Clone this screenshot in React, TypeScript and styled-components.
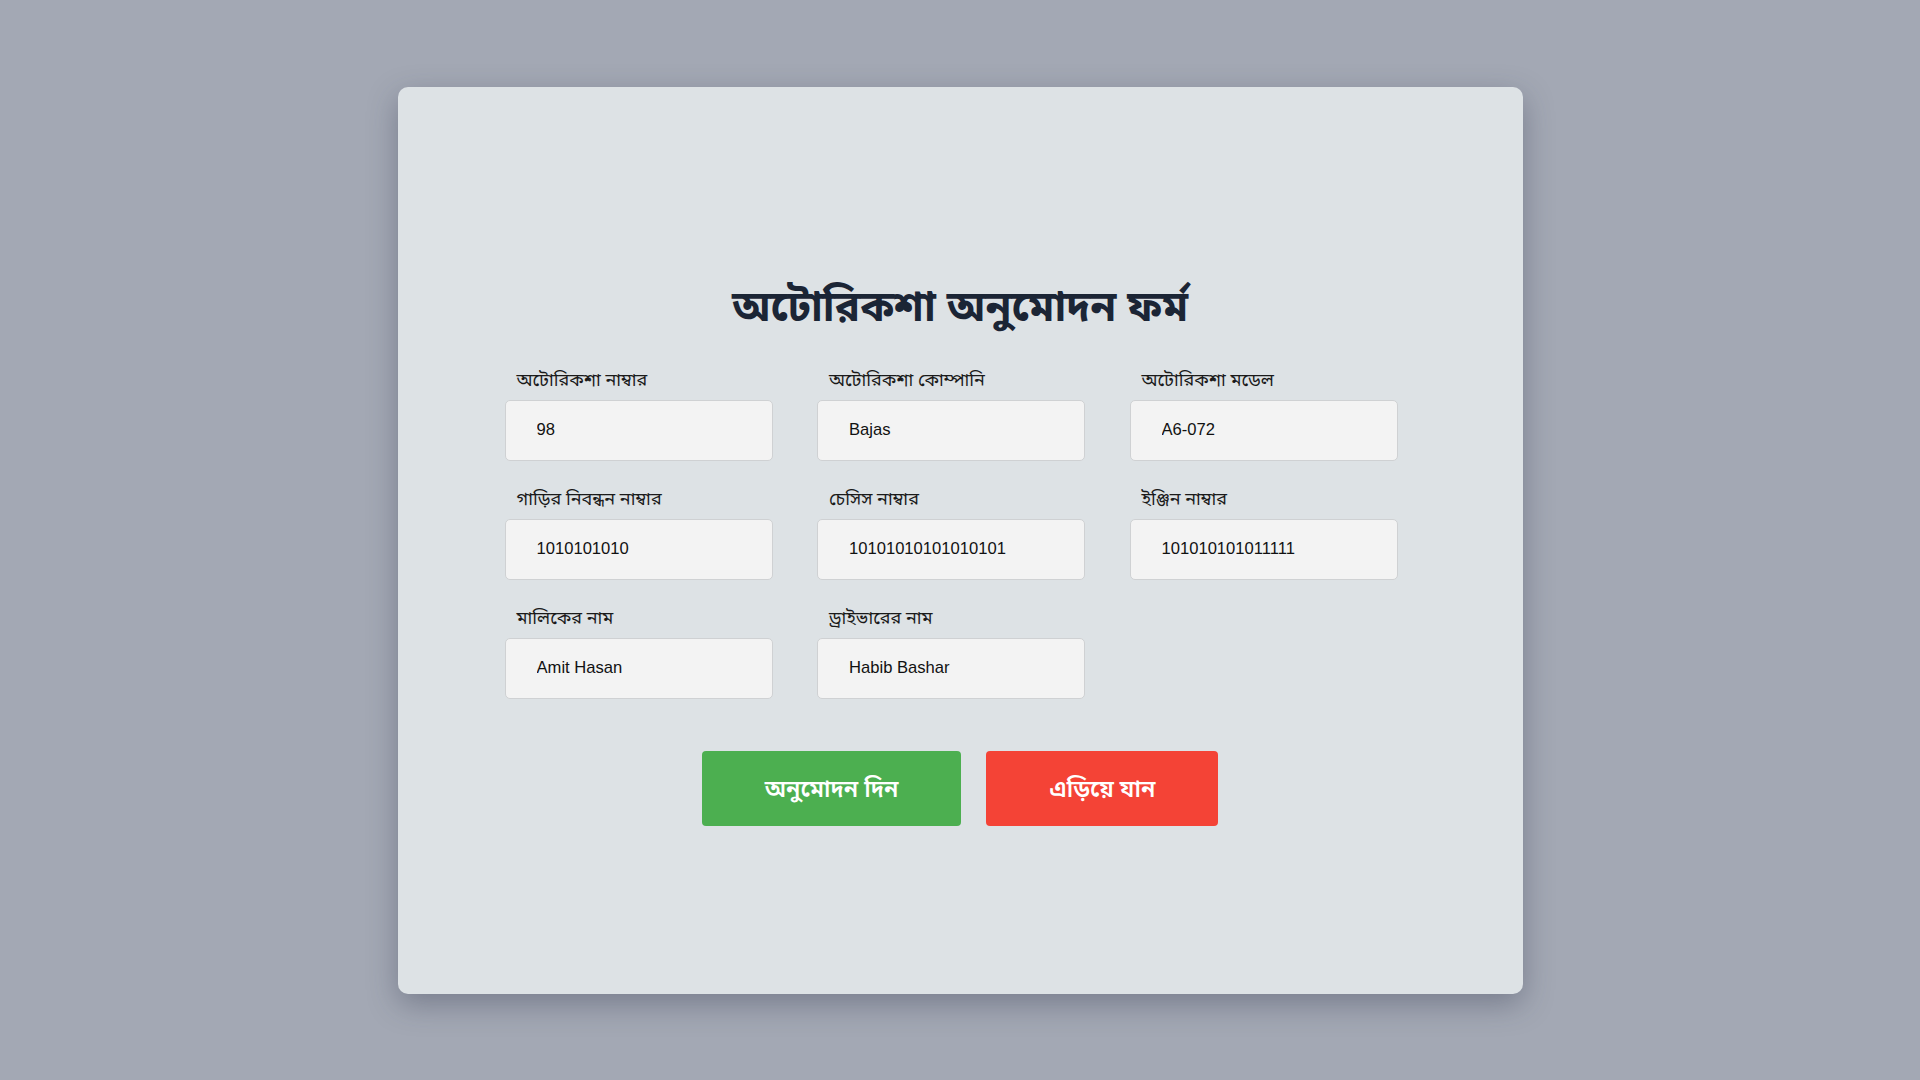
import React from "react";
import styled, { createGlobalStyle } from "styled-components";

const Global = createGlobalStyle`
  html, body {
    margin: 0;
    padding: 0;
    background: #a3a8b4;
  }
  body {
    font-family: "Noto Sans Bengali", "Noto Sans", "Liberation Sans", sans-serif;
  }
  * { box-sizing: border-box; }
`;

const Page = styled.div`
  width: 1920px;
  height: 1080px;
  display: flex;
  align-items: center;
  justify-content: center;
  background: #a3a8b4;
`;

const Card = styled.div`
  width: 1125px;
  height: 907px;
  background: #dde2e5;
  border-radius: 10px;
  box-shadow: 0 10px 30px rgba(40, 45, 70, 0.35);
  display: flex;
  flex-direction: column;
  align-items: center;
  padding-top: 195px;
`;

const Title = styled.h1`
  margin: 0 0 30px;
  font-size: 42px;
  line-height: 56px;
  font-weight: 700;
  color: #1b2535;
  text-align: center;
`;

const Grid = styled.div`
  display: grid;
  grid-template-columns: repeat(3, 268px);
  column-gap: 44.5px;
  row-gap: 26px;
  padding-right: 18px;
`;

const Field = styled.div`
  display: flex;
  flex-direction: column;
`;

const Label = styled.label`
  font-size: 18px;
  line-height: 26px;
  color: #1a1a1a;
  padding-left: 12px;
  margin-bottom: 6px;
`;

const Input = styled.input`
  height: 61px;
  width: 268px;
  background: #f3f3f3;
  border: 1px solid #cfd1d3;
  border-radius: 5px;
  padding: 0 0 0 31px;
  font-family: "Liberation Sans", Arial, sans-serif;
  font-size: 16.6px;
  color: #111;
  outline: none;
`;

const Actions = styled.div`
  display: flex;
  gap: 25px;
  margin-top: 52px;
`;

const Button = styled.button<{ $tone: "approve" | "skip" }>`
  height: 75px;
  padding: 5px 63px 0;
  border: none;
  border-radius: 4px;
  background: ${(p) => (p.$tone === "approve" ? "#4caf50" : "#f44336")};
  color: #ffffff;
  font-family: "Noto Sans Bengali", "Noto Sans", sans-serif;
  font-size: 23.5px;
  font-weight: 600;
  cursor: pointer;
`;

const fields = [
  { label: "অটোরিকশা নাম্বার", value: "98" },
  { label: "অটোরিকশা কোম্পানি", value: "Bajas" },
  { label: "অটোরিকশা মডেল", value: "A6-072" },
  { label: "গাড়ির নিবন্ধন নাম্বার", value: "1010101010" },
  { label: "চেসিস নাম্বার", value: "10101010101010101" },
  { label: "ইঞ্জিন নাম্বার", value: "101010101011111" },
  { label: "মালিকের নাম", value: "Amit Hasan" },
  { label: "ড্রাইভারের নাম", value: "Habib Bashar" },
];

export default function App() {
  return (
    <>
      <Global />
      <Page>
        <Card>
          <Title>অটোরিকশা অনুমোদন ফর্ম</Title>
          <Grid>
            {fields.map((f) => (
              <Field key={f.label}>
                <Label>{f.label}</Label>
                <Input defaultValue={f.value} />
              </Field>
            ))}
          </Grid>
          <Actions>
            <Button $tone="approve">অনুমোদন দিন</Button>
            <Button $tone="skip">এড়িয়ে যান</Button>
          </Actions>
        </Card>
      </Page>
    </>
  );
}
